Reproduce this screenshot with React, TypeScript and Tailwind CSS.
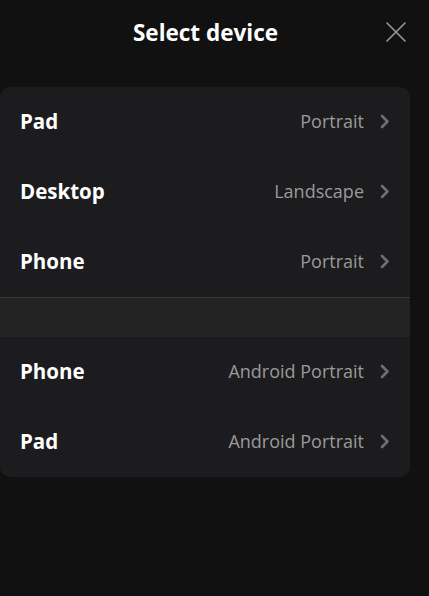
import React from 'react'

type Device = { name: string; mode: string }

const groups: Device[][] = [
  [
    { name: 'Pad', mode: 'Portrait' },
    { name: 'Desktop', mode: 'Landscape' },
    { name: 'Phone', mode: 'Portrait' },
  ],
  [
    { name: 'Phone', mode: 'Android Portrait' },
    { name: 'Pad', mode: 'Android Portrait' },
  ],
]

const Chevron = () => (
  <svg width="10" height="15" viewBox="0 0 10 15" fill="none" className="shrink-0">
    <path d="M2 2L7.5 7.5L2 13" stroke="#707070" strokeWidth={2.6} strokeLinecap="round" strokeLinejoin="round" />
  </svg>
)

const Row = ({ device }: { device: Device }) => (
  <button className="flex h-[70px] w-full items-center justify-between pb-[2px] pl-5 pr-[20px] text-left">
    <span className="text-[20.5px] font-bold text-white">{device.name}</span>
    <span className="flex items-center gap-[16px]">
      <span className="text-[18px] text-[#9a9a9a]">{device.mode}</span>
      <Chevron />
    </span>
  </button>
)

export default function App() {
  return (
    <div
      className="flex h-[596px] w-[429px] flex-col bg-[#111111]"
      style={{ fontFamily: '"Open Sans", "Noto Sans", sans-serif' }}
    >
      <header className="relative flex h-[66px] items-center justify-center">
        <h1 className="mr-[18px] text-[22.5px] font-bold text-white">Select device</h1>
        <button className="absolute right-[22px] top-[21px]" aria-label="Close">
          <svg width="22" height="22" viewBox="0 0 22 22" fill="none">
            <path d="M2 2L20 20M20 2L2 20" stroke="#9a9a9a" strokeWidth={1.6} strokeLinecap="round" />
          </svg>
        </button>
      </header>

      <div className="mt-[21px] w-[410px] overflow-hidden rounded-[10px] bg-[#1c1c1e]">
        {groups[0].map((d, i) => (
          <Row key={i} device={d} />
        ))}
        <div className="h-[40px] border-t border-[#3a3a3c] bg-[#232323]" />
        {groups[1].map((d, i) => (
          <Row key={i} device={d} />
        ))}
      </div>
    </div>
  )
}
